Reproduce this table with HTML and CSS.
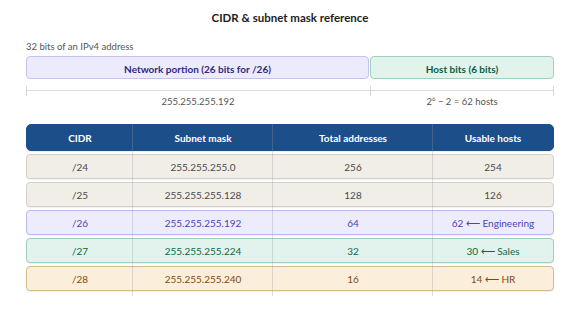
FILE: index.html
```html
<!DOCTYPE html>
<html>
<head>
<meta charset="utf-8">
<link rel="stylesheet" href="styles.css">
</head>
<body>
<div class="page">
  <h1 class="title">CIDR &amp; subnet mask reference</h1>
  <div class="caption">32 bits of an IPv4 address</div>
  <div class="bits">
    <div class="seg seg-net">Network portion (26 bits for /26)</div>
    <div class="seg seg-host">Host bits (6 bits)</div>
  </div>
  <div class="ruler">
    <div class="tick tick-net"></div>
    <div class="tick tick-host"></div>
  </div>
  <div class="ruler-labels">
    <div class="rl rl-net">255.255.255.192</div>
    <div class="rl rl-host">2<sup>6</sup> − 2 = 62 hosts</div>
  </div>
  <div class="table">
    <div class="row head">
      <div>CIDR</div><div>Subnet mask</div><div>Total addresses</div><div>Usable hosts</div>
    </div>
    <div class="row r-gray">
      <div>/24</div><div>255.255.255.0</div><div>256</div><div>254</div>
    </div>
    <div class="row r-gray">
      <div>/25</div><div>255.255.255.128</div><div>128</div><div>126</div>
    </div>
    <div class="row r-purple">
      <div>/26</div><div>255.255.255.192</div><div>64</div><div>62 ⟵ Engineering</div>
    </div>
    <div class="row r-green">
      <div>/27</div><div>255.255.255.224</div><div>32</div><div>30 ⟵ Sales</div>
    </div>
    <div class="row r-orange">
      <div>/28</div><div>255.255.255.240</div><div>16</div><div>14 ⟵ HR</div>
    </div>
    <div class="vline v1"></div>
    <div class="vline v2"></div>
    <div class="vline v3"></div>
  </div>
</div>
</body>
</html>
```
FILE: styles.css
```css
* { box-sizing: border-box; }
html, body { margin: 0; padding: 0; background: #fff; }
body {
  font-family: Lato, "Open Sans", sans-serif;
  color: #333;
  width: 581px;
  height: 315px;
  overflow: hidden;
}
.page {
  width: 528px;
  margin-left: 26px;
  padding-top: 11px;
}
.title {
  margin: 0;
  font-size: 11.5px;
  font-weight: 700;
  text-align: center;
  line-height: 14px;
  color: #1e1e1e;
}
.caption {
  margin-top: 16px;
  font-size: 9.5px;
  line-height: 12px;
  color: #555;
}
.bits {
  display: flex;
  gap: 1px;
  margin-top: 3px;
  height: 23px;
}
.seg {
  display: flex;
  align-items: center;
  justify-content: center;
  font-size: 10px;
  font-weight: 700;
  border-radius: 4px;
  padding-top: 2px;
}
.seg-net {
  width: 343px;
  background: #ecebfc;
  border: 1px solid #c6c2ee;
  color: #2f2a78;
}
.seg-host {
  flex: 1;
  background: #e1f4ec;
  border: 1px solid #9fd1bd;
  color: #0f5a3f;
}
.ruler {
  display: flex;
  margin-top: 7px;
  height: 10px;
}
.tick {
  position: relative;
  border-left: 1px solid #d6d6d6;
  height: 10px;
}
.tick::after {
  content: "";
  position: absolute;
  left: 0;
  right: 0;
  top: 4px;
  border-top: 1px solid #dcdcdc;
}
.tick-net { width: 344px; }
.tick-host { flex: 1; border-right: 1px solid #d6d6d6; }
.ruler-labels {
  display: flex;
  margin-top: 0;
  font-size: 9.5px;
  line-height: 12px;
  color: #555;
}
.rl { text-align: center; }
.rl-net { width: 344px; }
.rl-host { flex: 1; }
.rl sup { font-size: 6px; vertical-align: 4px; line-height: 0; }
.table {
  position: relative;
  margin-top: 16px;
  display: flex;
  flex-direction: column;
  gap: 3px;
  padding-bottom: 5px;
}
.row {
  display: grid;
  grid-template-columns: 106px 140px 160px 1fr;
  height: 25px;
  border-radius: 4px;
  border: 1px solid;
  font-size: 10px;
  align-items: center;
  text-align: center;
  box-shadow: 0 1px 0 rgba(0,0,0,0.06);
}
.row.head {
  height: 27px;
  background: #1c4f89;
  border-color: #1c4f89;
  color: #fff;
  font-weight: 700;
  border-radius: 5px;
}
.r-gray { background: #f1eee8; border-color: #d4d1c9; color: #4a4a4a; }
.r-purple { background: #edecfc; border-color: #bcb8ec; color: #4c44b5; }
.r-green { background: #e1f3ec; border-color: #9fcfba; color: #0f6546; }
.r-orange { background: #fbeedb; border-color: #d6b98e; color: #844a0c; }
.vline {
  position: absolute;
  top: 0;
  bottom: 0;
  width: 1px;
  background: rgba(150,150,150,0.3);
}
.v1 { left: 106px; }
.v2 { left: 246px; }
.v3 { left: 406px; }
```
